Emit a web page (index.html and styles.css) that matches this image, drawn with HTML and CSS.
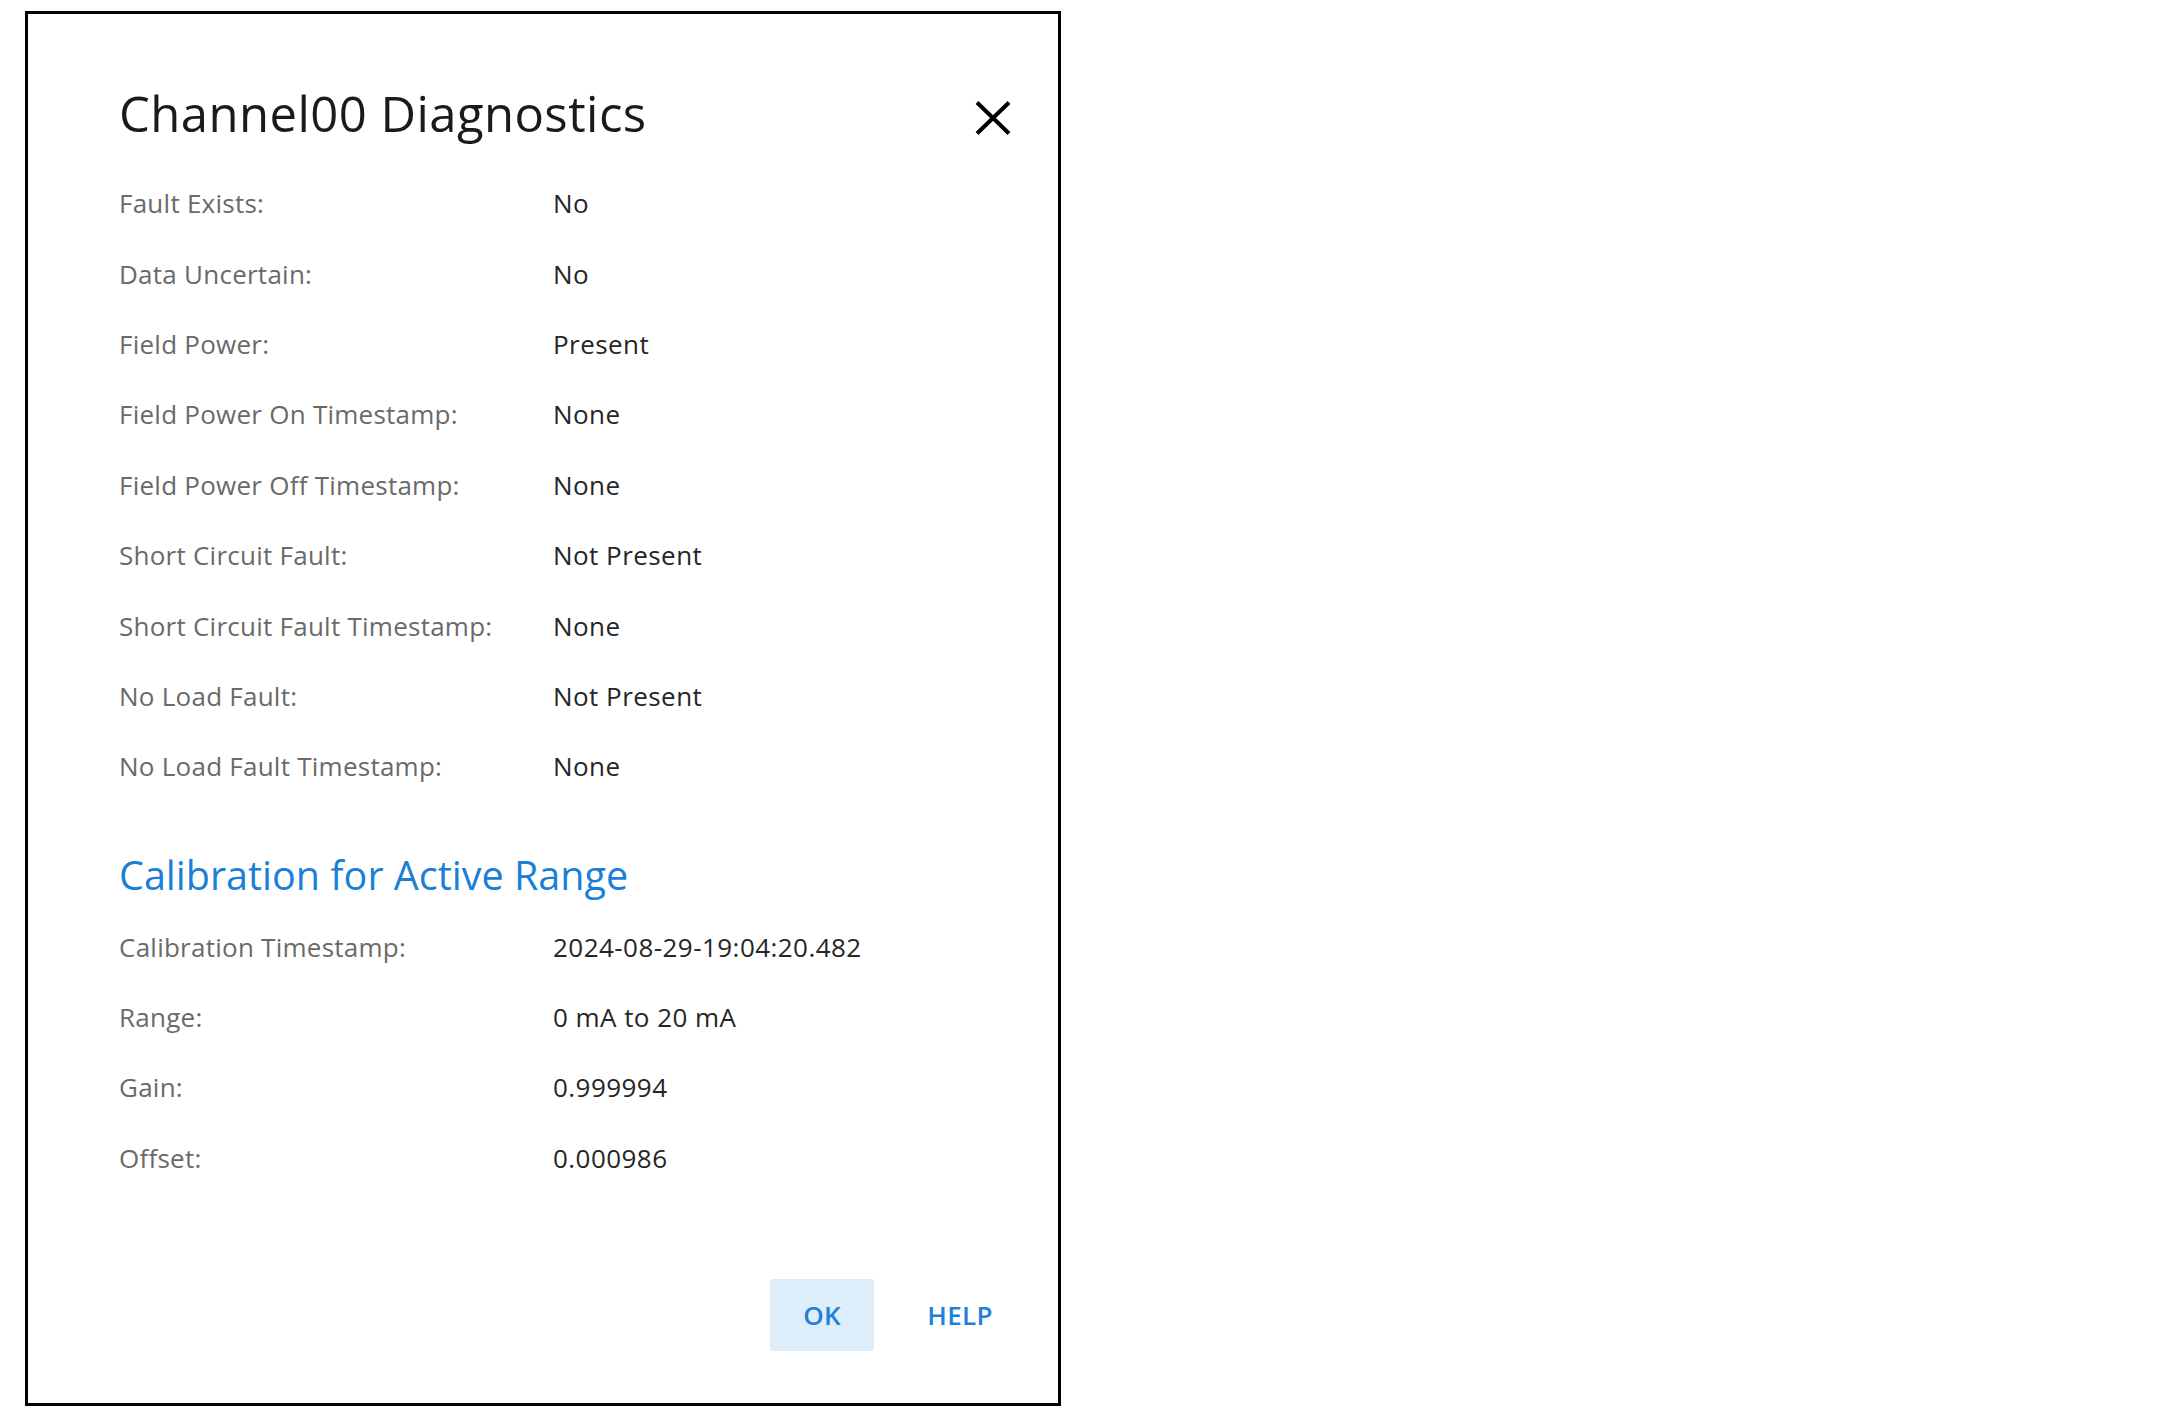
FILE: index.html
```html
<!DOCTYPE html>
<html lang="en">
<head>
<meta charset="utf-8">
<title>Channel00 Diagnostics</title>
<link rel="stylesheet" href="styles.css">
</head>
<body>
<div class="dialog" role="dialog" aria-labelledby="dlg-title">
  <div class="dialog-header">
    <h1 id="dlg-title" class="dialog-title">Channel00 Diagnostics</h1>
    <button class="close-btn" aria-label="Close">
      <svg viewBox="0 0 36 34" width="36" height="34" aria-hidden="true">
        <path d="M2 1.5 L34 32.5 M34 1.5 L2 32.5" stroke="#000" stroke-width="4" stroke-linecap="butt" fill="none"/>
      </svg>
    </button>
  </div>

  <dl class="props">
    <div class="prop"><dt>Fault Exists:</dt><dd>No</dd></div>
    <div class="prop"><dt>Data Uncertain:</dt><dd>No</dd></div>
    <div class="prop"><dt>Field Power:</dt><dd>Present</dd></div>
    <div class="prop"><dt>Field Power On Timestamp:</dt><dd>None</dd></div>
    <div class="prop"><dt>Field Power Off Timestamp:</dt><dd>None</dd></div>
    <div class="prop"><dt>Short Circuit Fault:</dt><dd>Not Present</dd></div>
    <div class="prop"><dt>Short Circuit Fault Timestamp:</dt><dd>None</dd></div>
    <div class="prop"><dt>No Load Fault:</dt><dd>Not Present</dd></div>
    <div class="prop"><dt>No Load Fault Timestamp:</dt><dd>None</dd></div>
  </dl>

  <h2 class="section-title">Calibration for Active Range</h2>

  <dl class="props props-cal">
    <div class="prop"><dt>Calibration Timestamp:</dt><dd>2024-08-29-19:04:20.482</dd></div>
    <div class="prop"><dt>Range:</dt><dd>0 mA to 20 mA</dd></div>
    <div class="prop"><dt>Gain:</dt><dd>0.999994</dd></div>
    <div class="prop"><dt>Offset:</dt><dd>0.000986</dd></div>
  </dl>

  <div class="dialog-actions">
    <button class="btn btn-primary">OK</button>
    <button class="btn btn-text">HELP</button>
  </div>
</div>
</body>
</html>
```

FILE: styles.css
```css
html, body {
  margin: 0;
  padding: 0;
  background: #ffffff;
}

body {
  font-family: "Open Sans", "Noto Sans", "Liberation Sans", sans-serif;
  color: #222;
}

.dialog {
  box-sizing: border-box;
  width: 1036px;
  height: 1395px;
  margin: 11px 0 0 25px;
  border: 3px solid #000;
  padding: 0 46px 0 91px;
  display: flex;
  flex-direction: column;
}

/* header: title + close */
.dialog-header {
  display: flex;
  justify-content: space-between;
  align-items: center;
  padding: 66px 0 22px;
}

.dialog-title {
  margin: 0;
  font-size: 49px;
  font-weight: 400;
  line-height: 66px;
  color: #1a1a1a;
  letter-spacing: 0.45px;
}

.close-btn {
  border: 0;
  background: none;
  padding: 0;
  margin: 10px 1px 0 0;
  width: 36px;
  height: 34px;
  display: flex;
  cursor: pointer;
}

/* property list */
.props {
  margin: 0;
  display: flex;
  flex-direction: column;
}

.prop {
  display: grid;
  grid-template-columns: 434px 1fr;
  align-items: center;
  height: 70.4px;
}

.prop dt,
.prop dd {
  margin: 0;
  font-size: 26px;
  line-height: 36px;
  white-space: nowrap;
}

.prop dt {
  color: #6a6a6a;
  letter-spacing: 0.25px;
}

.prop dd {
  color: #262626;
  letter-spacing: 0.45px;
}

.section-title {
  margin: 48px 0 12px;
  font-size: 39.5px;
  font-weight: 400;
  line-height: 50px;
  color: #1b7fd6;
}

/* footer buttons */
.dialog-actions {
  margin-top: auto;
  padding-bottom: 52px;
  display: flex;
  justify-content: flex-end;
  gap: 34px;
}

.btn {
  font-family: inherit;
  font-size: 26px;
  font-weight: 600;
  letter-spacing: 0.3px;
  height: 72px;
  min-width: 104px;
  border: 0;
  border-radius: 3px;
  padding: 0 16px;
  color: #1e80d8;
  background: none;
  cursor: pointer;
}

.btn-primary {
  background: #ddedfa;
}
```
